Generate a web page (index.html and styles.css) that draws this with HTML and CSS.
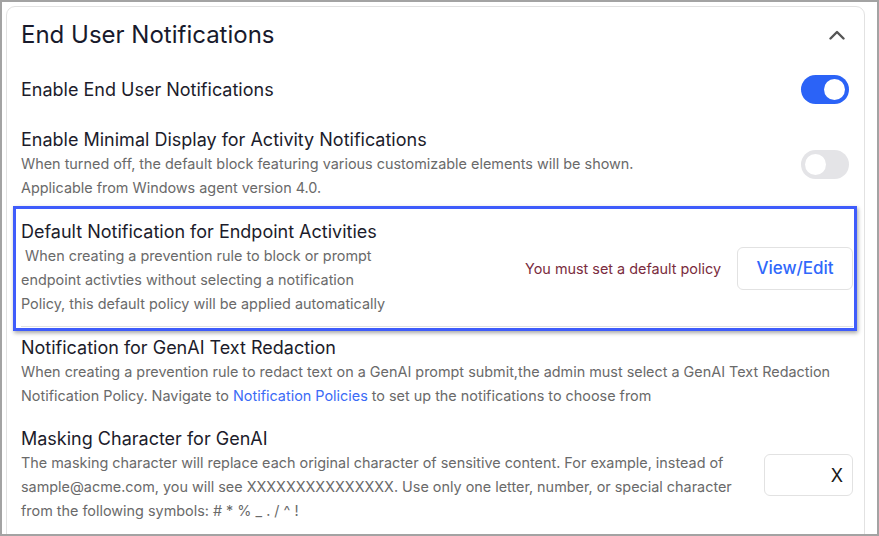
FILE: index.html
```html
<!DOCTYPE html>
<html lang="en">
<head>
<meta charset="utf-8">
<title>End User Notifications</title>
<link rel="stylesheet" href="styles.css">
</head>
<body>
<div class="frame">
  <section class="card">
    <header class="card-head">
      <h2 class="card-title">End User Notifications</h2>
      <svg class="chevron" width="16" height="10" viewBox="0 0 16 10" aria-hidden="true"><path d="M1.5 8.5 L8 2 L14.5 8.5" fill="none" stroke="#555" stroke-width="2.4" stroke-linecap="round" stroke-linejoin="round"/></svg>
    </header>

    <div class="row row-first">
      <div class="text"><div class="label">Enable End User Notifications</div></div>
      <span class="toggle on"><span class="knob"></span></span>
    </div>

    <div class="row row-minimal">
      <div class="text">
        <div class="label">Enable Minimal Display for Activity Notifications</div>
        <div class="desc">When turned off, the default block featuring various customizable elements will be shown.<br>Applicable from Windows agent version 4.0.</div>
      </div>
      <span class="toggle"><span class="knob"></span></span>
    </div>

    <div class="row row-default">
      <div class="text">
        <div class="label">Default Notification for Endpoint Activities</div>
        <div class="desc">&nbsp;When creating a prevention rule to block or prompt<br>endpoint activties without selecting a notification<br>Policy, this default policy will be applied automatically</div>
      </div>
      <div class="actions">
        <span class="warn">You must set a default policy</span>
        <button class="btn">View/Edit</button>
      </div>
      <div class="annot"></div>
    </div>

    <div class="row row-genai">
      <div class="text">
        <div class="label">Notification for GenAI Text Redaction</div>
        <div class="desc">When creating a prevention rule to redact text on a GenAI prompt submit,the admin must select a GenAI Text Redaction<br>Notification Policy. Navigate to <a class="link" href="#">Notification Policies</a> to set up the notifications to choose from</div>
      </div>
    </div>

    <div class="row row-mask">
      <div class="text">
        <div class="label">Masking Character for GenAI</div>
        <div class="desc">The masking character will replace each original character of sensitive content. For example, instead of<br>sample@acme.com, you will see XXXXXXXXXXXXXXX. Use only one letter, number, or special character<br>from the following symbols: # * % _ . / ^ !</div>
      </div>
      <input class="mask-input" type="text" value="X">
    </div>
  </section>
</div>
</body>
</html>
```

FILE: styles.css
```css
* { box-sizing: border-box; }
html, body { margin: 0; padding: 0; background: #fff; }
body { font-family: Inter, "Noto Sans", sans-serif; color: #1c1c2b; }

.frame {
  width: 879px;
  height: 536px;
  border: 2px solid #a3a3a3;
  overflow: hidden;
  padding: 4px 0 0 4px;
  background: #fff;
}

.card {
  width: 859px;
  height: 620px;
  border: 1px solid #e2e2e2;
  border-radius: 9px;
  padding: 14px 11px 0 14px;
  background: #fff;
}

.card-head {
  display: flex;
  align-items: center;
  justify-content: space-between;
  height: 28px;
}
.card-title {
  margin: 0;
  font-size: 24px;
  line-height: 28px;
  font-weight: 400;
  color: #181a2c;
}
.chevron { margin-right: 8px; display: block; }

.row {
  display: flex;
  align-items: center;
  justify-content: space-between;
  position: relative;
}
.text { display: flex; flex-direction: column; }
.label {
  font-size: 18px;
  line-height: 24px;
  color: #1c1c2b;
}
.desc {
  font-size: 14.4px;
  line-height: 24px;
  color: #6a6a6a;
  white-space: nowrap;
}
.link { color: #3b6bf6; text-decoration: none; }

.row-first { margin-top: 26px; height: 29px; }
.row-minimal { margin-top: 24px; }
.row-default {
  margin-top: 20px;
  padding-bottom: 10px;
  border-bottom: 1px solid #e2e2e2;
}
.row-genai { margin-top: 9px; }
.row-mask { margin-top: 19px; }

.toggle {
  width: 48px;
  height: 29px;
  border-radius: 15px;
  background: #e4e4e7;
  margin-right: 4px;
  padding: 4px;
  display: flex;
  align-items: center;
  flex: none;
}
.toggle .knob {
  width: 21px;
  height: 21px;
  border-radius: 50%;
  background: #fff;
}
.toggle.on { background: #2b63f7; justify-content: flex-end; }

.actions {
  display: flex;
  align-items: center;
  gap: 16px;
}
.warn {
  font-size: 14.4px;
  color: #7a2c3e;
}
.btn {
  width: 116px;
  height: 43px;
  border: 1px solid #e2e2e2;
  border-radius: 6px;
  background: #fff;
  font-family: Inter, "Noto Sans", sans-serif;
  font-size: 17px;
  font-weight: 500;
  color: #3068fb;
  padding: 0;
}

.annot {
  position: absolute;
  left: -8px;
  right: -4px;
  top: -14px;
  bottom: -5px;
  border: 3px solid #3f5cfb;
  box-shadow: 1px 2px 4px rgba(0, 0, 0, 0.35);
  pointer-events: none;
}

.mask-input {
  width: 89px;
  height: 42px;
  border: 1px solid #e2e2e2;
  border-radius: 6px;
  font-family: Inter, "Noto Sans", sans-serif;
  font-size: 18px;
  color: #1a1a1a;
  text-align: right;
  padding: 0 9px 0 0;
  outline: none;
  flex: none;
}
```
